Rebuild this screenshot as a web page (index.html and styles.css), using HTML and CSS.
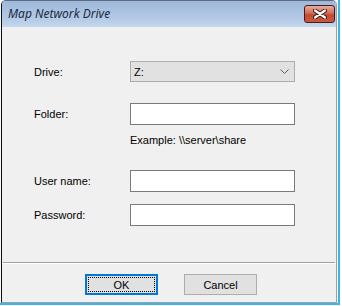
FILE: index.html
```html
<!DOCTYPE html>
<html lang="en">
<head>
    <meta charset="UTF-8">
    <title>Map Network Drive</title>
    <link rel="stylesheet" href="styles.css">
</head>
<body>
    <div class="frame">
        <div class="window">
            <div class="titlebar">
                <span class="title">Map Network Drive</span>
                <div class="close">
                    <svg width="14" height="10" viewBox="0 0 14 10">
                        <path d="M2 1.5 L12 8.5 M12 1.5 L2 8.5" stroke="#3a1410" stroke-width="4" stroke-linecap="round"/>
                        <path d="M2 1.5 L12 8.5 M12 1.5 L2 8.5" stroke="#ffffff" stroke-width="2.2" stroke-linecap="round"/>
                    </svg>
                </div>
            </div>

            <div class="client">
                <div class="row row-drive">
                    <label>Drive:</label>
                    <div class="combo">
                        <span>Z:</span>
                        <svg width="9" height="6" viewBox="0 0 9 6">
                            <path d="M0.5 0.5 L4.5 4.5 L8.5 0.5" fill="none" stroke="#606060" stroke-width="1"/>
                        </svg>
                    </div>
                </div>

                <div class="row row-folder">
                    <label for="folder">Folder:</label>
                    <input type="text" id="folder" class="field">
                </div>
                <div class="hint">Example: \\server\share</div>

                <div class="row row-user">
                    <label for="user">User name:</label>
                    <input type="text" id="user" class="field">
                </div>

                <div class="row row-pass">
                    <label for="pass">Password:</label>
                    <input type="password" id="pass" class="field">
                </div>

                <div class="separator"></div>

                <div class="buttons">
                    <button class="btn btn-default"><span>OK</span></button>
                    <button class="btn">Cancel</button>
                </div>
            </div>
        </div>
    </div>
</body>
</html>
```

FILE: styles.css
```css
body {
    margin: 0;
    padding: 0;
    background-color: #ffffff;
    font-family: "Liberation Sans", Arial, sans-serif;
    font-size: 11px;
    color: #000;
}
.frame {
    width: 340px;
    height: 305px;
    box-sizing: border-box;
    padding-left: 1px;
    border-right: 2px solid #3cb6e8;
    border-bottom: 2px solid #3cb6e8;
    background-color: #f7f7f7;
}
.window {
    width: 336px;
    height: 303px;
    box-sizing: border-box;
    border-left: 1px solid #111;
    border-top: 1px solid #5b6b80;
    border-right: 1px solid #a0a0a0;
    border-bottom: 1px solid #a0a0a0;
    border-top-left-radius: 5px;
    border-top-right-radius: 5px;
    display: flex;
    flex-direction: column;
    overflow: hidden;
}
.titlebar {
    height: 26px;
    flex-shrink: 0;
    display: flex;
    align-items: flex-start;
    justify-content: space-between;
    background: linear-gradient(#9db8d9, #b4cbe6 70%, #c4d7ee);
}
.title {
    margin: 4px 0 0 6px;
    font-family: "Noto Sans", "Open Sans", sans-serif;
    font-style: italic;
    font-size: 12px;
    line-height: 17px;
    color: #1a2a44;
}
.close {
    margin: 4px 1px 0 0;
    width: 31px;
    height: 18px;
    box-sizing: border-box;
    border: 1px solid #4a1a14;
    border-radius: 3px;
    background: linear-gradient(#e7ab9d, #d26c57 45%, #c34a33 55%, #c85a40);
    display: flex;
    align-items: center;
    justify-content: center;
}
.client {
    flex: 1;
    background-color: #f0f0f0;
    padding-top: 34px;
    display: flex;
    flex-direction: column;
}
.row {
    display: flex;
    align-items: center;
    padding-left: 32px;
}
.row label {
    width: 96px;
}
.row-drive {
    height: 21px;
}
.row-folder {
    margin-top: 21px;
    height: 22px;
}
.row-user {
    margin-top: 23px;
    height: 22px;
}
.row-pass {
    margin-top: 12px;
    height: 22px;
}
.combo {
    width: 165px;
    height: 21px;
    box-sizing: border-box;
    border: 1px solid #adadad;
    background-color: #e1e1e1;
    display: flex;
    align-items: center;
    justify-content: space-between;
    padding: 0 5px 0 3px;
}
.field {
    width: 165px;
    height: 22px;
    box-sizing: border-box;
    margin: 0;
    border: 1px solid #7a7a7a;
    background-color: #fff;
    font-family: inherit;
    font-size: 11px;
}
.hint {
    margin-top: 8px;
    padding-left: 128px;
    line-height: 14px;
}
.separator {
    margin: 36px 1px 0 1px;
    height: 1px;
    background-color: #a0a0a0;
    border-bottom: 1px solid #fff;
}
.buttons {
    margin-top: 10px;
    padding-left: 83px;
    display: flex;
    gap: 26px;
}
.btn {
    width: 73px;
    height: 21px;
    box-sizing: border-box;
    margin: 0;
    padding: 0;
    border: 1px solid #adadad;
    background-color: #e1e1e1;
    font-family: inherit;
    font-size: 11px;
    color: #000;
}
.btn-default {
    border: 2px solid #0078d7;
    padding: 1px;
}
.btn-default span {
    display: flex;
    align-items: center;
    justify-content: center;
    height: 100%;
    box-sizing: border-box;
    border: 1px dotted #000;
}
```
